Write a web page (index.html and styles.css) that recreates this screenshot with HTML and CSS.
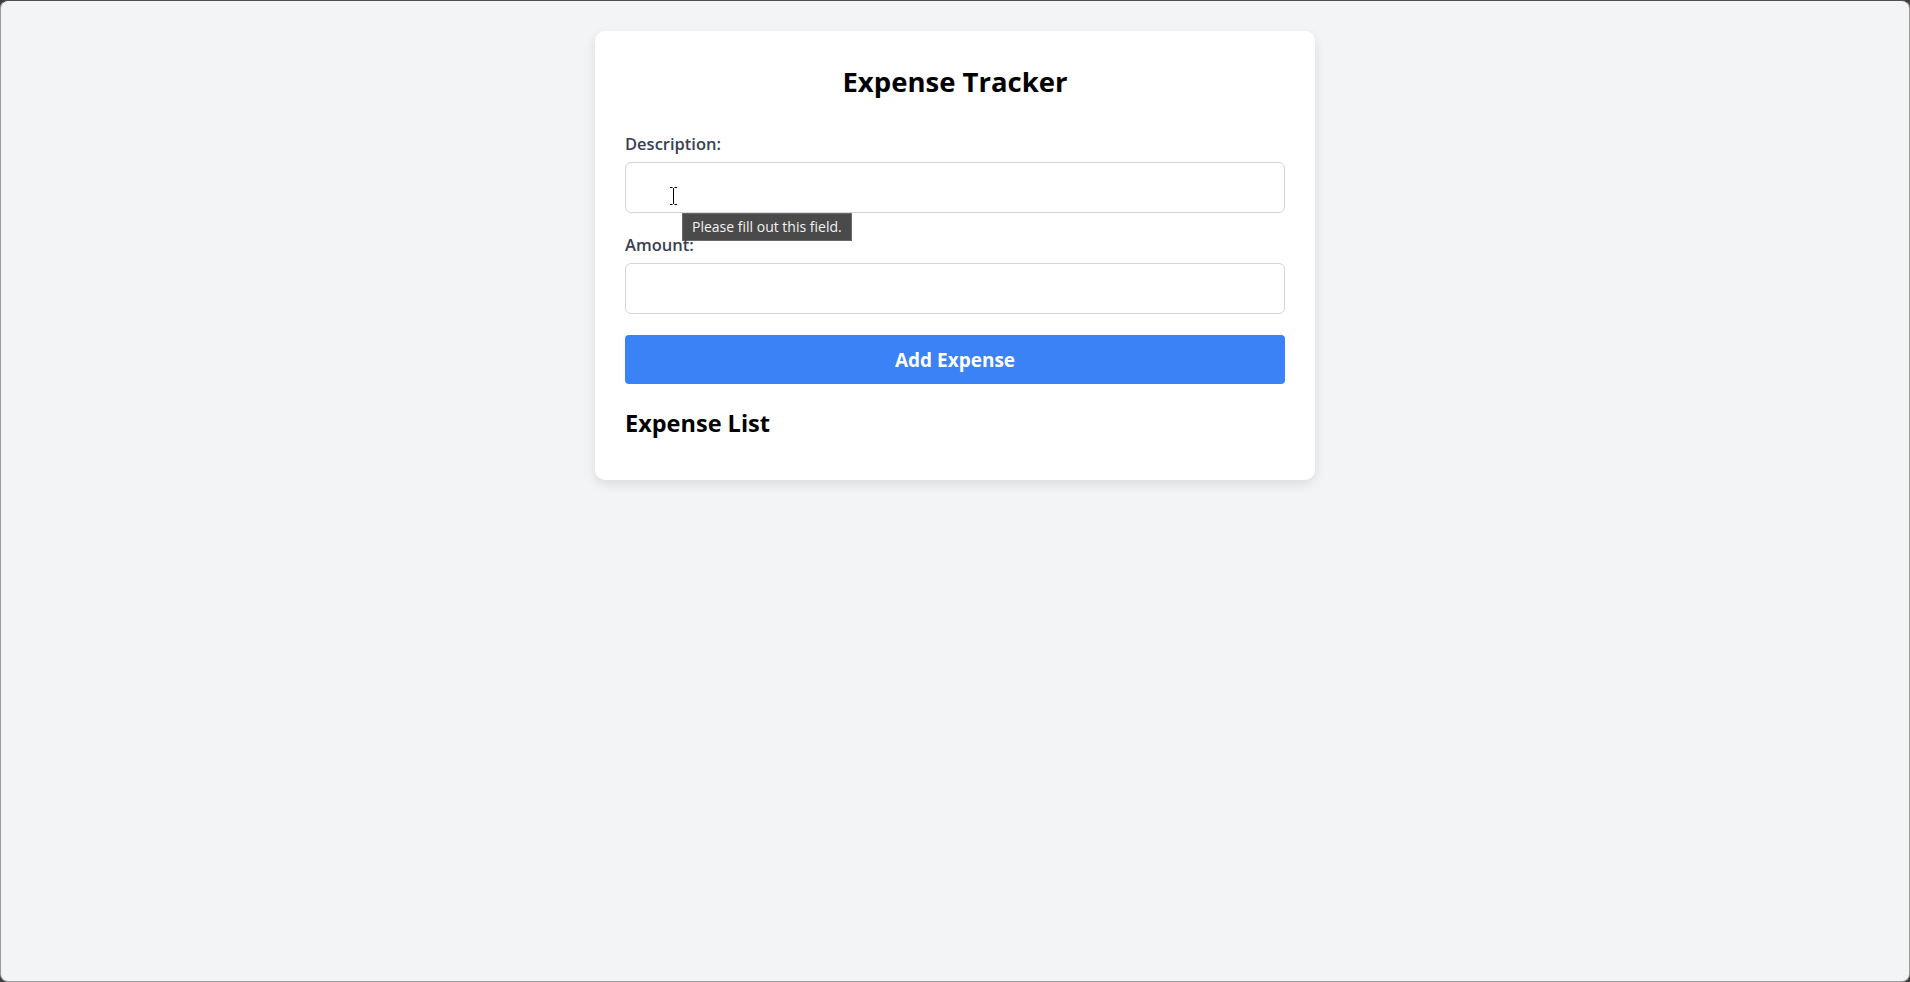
FILE: index.html
```html
<!DOCTYPE html>
<html lang="en">
<head>
<meta charset="utf-8">
<title>Expense Tracker</title>
<link rel="stylesheet" href="styles.css">
</head>
<body>
<div class="screen">
  <div class="card">
    <h1 class="title">Expense Tracker</h1>
    <form class="form">
      <div class="group">
        <label class="label" for="desc">Description:</label>
        <input class="field" id="desc" type="text">
        <svg class="ibeam" width="9" height="20" viewBox="0 0 9 20" aria-hidden="true">
          <path d="M1 1.5h2.5M5.5 1.5H8M4.5 2v16M1 18.5h2.5M5.5 18.5H8" stroke="#fff" stroke-width="3" fill="none"/>
          <path d="M1 1.5h2.5M5.5 1.5H8M4.5 2v16M1 18.5h2.5M5.5 18.5H8" stroke="#000" stroke-width="1" fill="none"/>
        </svg>
        <div class="tooltip">Please fill out this field.</div>
      </div>
      <div class="group">
        <label class="label" for="amt">Amount:</label>
        <input class="field" id="amt" type="number">
      </div>
      <button class="btn" type="button">Add Expense</button>
    </form>
    <h2 class="subtitle">Expense List</h2>
  </div>
</div>
</body>
</html>
```

FILE: styles.css
```css
html, body {
  margin: 0;
  padding: 0;
  height: 100%;
  background: #3c3c3c;
}

body {
  font-family: "Open Sans", "Noto Sans", "Liberation Sans", sans-serif;
}

.screen {
  box-sizing: border-box;
  height: 100vh;
  background: #f3f4f6;
  border: 1px solid #9a9a9a;
  border-top-color: #505050;
  border-radius: 8px;
  overflow: hidden;
}

.card {
  box-sizing: border-box;
  width: 720px;
  margin: 30px auto 0;
  padding: 30px;
  background: #ffffff;
  border-radius: 10px;
  box-shadow: 0 4px 12px rgba(0, 0, 0, 0.1);
}

.title {
  margin: 3px 0 32px;
  font-size: 27.5px;
  line-height: 36px;
  font-weight: 700;
  color: #000;
  text-align: center;
}

.form {
  display: flex;
  flex-direction: column;
}

.group {
  position: relative;
  display: flex;
  flex-direction: column;
  margin-bottom: 20px;
}

.label {
  font-size: 16.5px;
  line-height: 24px;
  font-weight: 600;
  color: #374151;
  margin-bottom: 6px;
}

.field {
  box-sizing: border-box;
  height: 51px;
  width: 100%;
  padding: 0 12px;
  border: 1px solid #d1d5db;
  border-radius: 6px;
  background: #fff;
  font: inherit;
  font-size: 17px;
  outline: none;
}

.ibeam {
  position: absolute;
  left: 44px;
  top: 54px;
}

.tooltip {
  position: absolute;
  left: 57px;
  top: 81px;
  box-sizing: border-box;
  height: 28px;
  padding: 0 9px;
  background: #4a4a4a;
  border: 1px solid #6a6a6a;
  color: #f2f2f2;
  font-size: 14px;
  line-height: 26px;
  white-space: nowrap;
}

.btn {
  margin-top: 1px;
  height: 49px;
  width: 100%;
  border: none;
  border-radius: 4px;
  background: #3b82f6;
  color: #fff;
  font-family: inherit;
  font-size: 19px;
  font-weight: 700;
  cursor: pointer;
}

.subtitle {
  margin: 23px 0 11px;
  font-size: 23.5px;
  line-height: 32px;
  font-weight: 700;
  color: #000;
}
```
